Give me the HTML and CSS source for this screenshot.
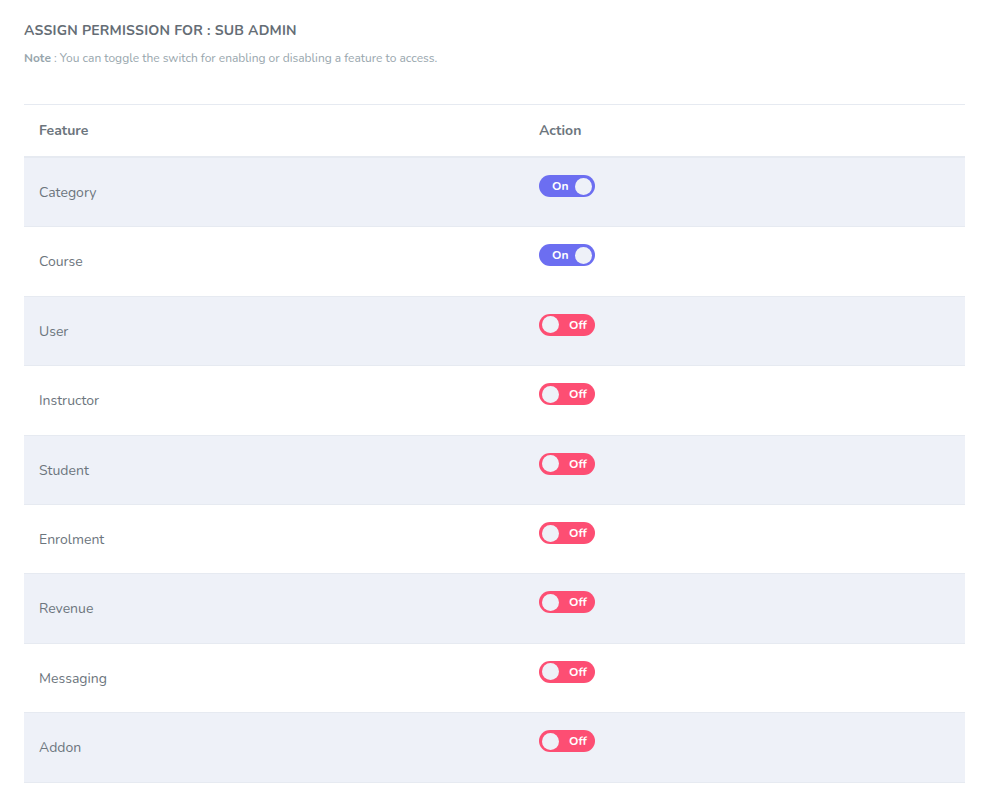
FILE: index.html
```html
<!DOCTYPE html>
<html>
<head>
<meta charset="utf-8">
<link rel="stylesheet" href="styles.css">
</head>
<body>
<div class="page">
  <h4 class="title">ASSIGN PERMISSION FOR : SUB ADMIN</h4>
  <p class="note"><b>Note</b> : You can toggle the switch for enabling or disabling a feature to access.</p>
  <table class="perm">
    <thead>
      <tr><th class="col-feature">Feature</th><th>Action</th></tr>
    </thead>
    <tbody>
      <tr><td>Category</td><td><span class="sw on"><span class="lbl">On</span><span class="knob"></span></span></td></tr>
      <tr><td>Course</td><td><span class="sw on"><span class="lbl">On</span><span class="knob"></span></span></td></tr>
      <tr><td>User</td><td><span class="sw off"><span class="knob"></span><span class="lbl">Off</span></span></td></tr>
      <tr><td>Instructor</td><td><span class="sw off"><span class="knob"></span><span class="lbl">Off</span></span></td></tr>
      <tr><td>Student</td><td><span class="sw off"><span class="knob"></span><span class="lbl">Off</span></span></td></tr>
      <tr><td>Enrolment</td><td><span class="sw off"><span class="knob"></span><span class="lbl">Off</span></span></td></tr>
      <tr><td>Revenue</td><td><span class="sw off"><span class="knob"></span><span class="lbl">Off</span></span></td></tr>
      <tr><td>Messaging</td><td><span class="sw off"><span class="knob"></span><span class="lbl">Off</span></span></td></tr>
      <tr><td>Addon</td><td><span class="sw off"><span class="knob"></span><span class="lbl">Off</span></span></td></tr>
      <tr><td>Settings</td><td><span class="sw off"><span class="knob"></span><span class="lbl">Off</span></span></td></tr>
    </tbody>
  </table>
</div>
</body>
</html>
```
FILE: styles.css
```css
html, body {
  margin: 0;
  padding: 0;
  background: #ffffff;
}
body {
  font-family: "Nunito", "Lato", "Open Sans", sans-serif;
  color: #6c757d;
  overflow: hidden;
}
.page {
  padding: 22px 23px 0 24px;
}
.title {
  margin: 0;
  font-size: 14px;
  font-weight: 700;
  line-height: 18px;
  color: #656d75;
  letter-spacing: 0.2px;
}
.note {
  margin: 10px 0 0;
  font-size: 12px;
  line-height: 16px;
  color: #98a6ad;
}
.note b {
  font-weight: 700;
}
.perm {
  margin-top: 38px;
  width: 100%;
  border-collapse: collapse;
  font-size: 14px;
}
.perm th {
  text-align: left;
  font-weight: 700;
  color: #6c757d;
  padding: 16px 15px 15px;
  line-height: 20px;
  border-top: 1px solid #e6eaf1;
  border-bottom: 2px solid #e6eaf1;
}
.perm .col-feature {
  width: 470px;
}
.perm td {
  padding: 24px 15px 23px;
  line-height: 21.4px;
  border-top: 1px solid #e6eaf1;
  color: #6c757d;
  vertical-align: top;
}
.perm tbody tr:nth-child(odd) td {
  background: #eef1f8;
}
.sw {
  display: inline-flex;
  align-items: center;
  width: 56px;
  height: 22px;
  border-radius: 11px;
  box-sizing: border-box;
  padding: 0 3px;
  margin-top: -7px;
  vertical-align: top;
  color: #fff;
  font-size: 12px;
  font-weight: 700;
  line-height: 1;
}
.sw.on {
  background: #6c6ef1;
  justify-content: space-between;
  padding-left: 13px;
}
.sw.off {
  background: #fd4e73;
  padding-left: 3px;
}
.sw.off .lbl {
  margin-left: 10px;
}
.knob {
  width: 17px;
  height: 17px;
  border-radius: 50%;
  background: #eef1f8;
}
```
